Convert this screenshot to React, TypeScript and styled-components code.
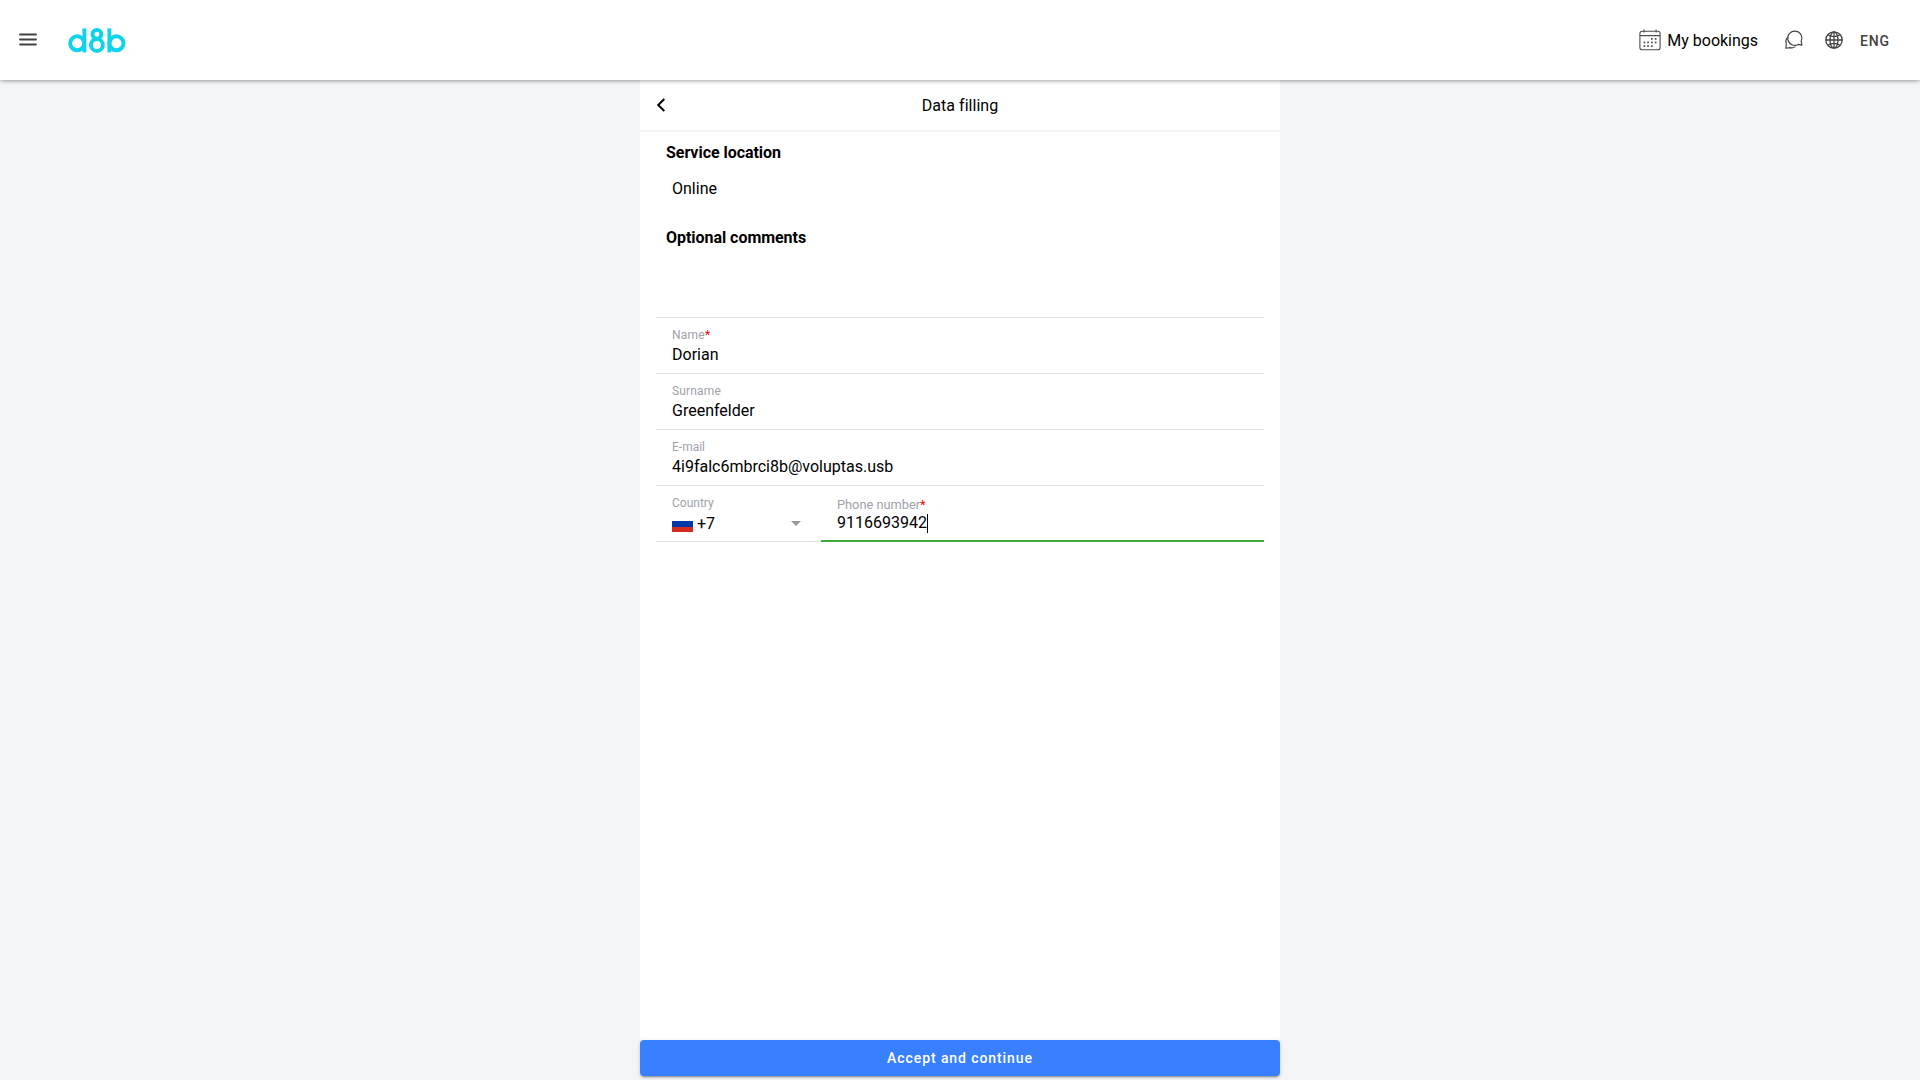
import React from 'react';
import styled, { createGlobalStyle } from 'styled-components';

const Global = createGlobalStyle`
  * { box-sizing: border-box; }
  body { margin: 0; background: #f3f5f9; font-family: Roboto, sans-serif; font-size: 16px; color: #000; }
`;

const Page = styled.div`
  height: 100vh;
  display: flex;
  flex-direction: column;
  align-items: center;
  overflow: hidden;
`;

const Header = styled.header`
  width: 100%;
  height: 80px;
  flex: none;
  display: flex;
  align-items: center;
  padding: 0 30px 0 16px;
  background: #fff;
  z-index: 1;
  box-shadow: 0 2px 4px -1px rgba(0, 0, 0, 0.2), 0 1px 4px rgba(0, 0, 0, 0.2);
`;

const IconButton = styled.button<{ $left?: number }>`
  display: flex;
  padding: 0;
  margin-left: ${(p) => p.$left ?? 0}px;
  border: 0;
  background: none;
  color: #424242;
`;

const Logo = styled.svg`
  margin-left: 27px;
`;

const Bookings = styled.a`
  display: flex;
  align-items: center;
  gap: 6px;
  margin-left: auto;
  line-height: 20px;
  color: #000;
`;

const BookingsText = styled.span`
  padding-top: 2px;
`;

const Language = styled.span`
  margin-left: 17px;
  padding-top: 1px;
  font-size: 14px;
  font-weight: 500;
  line-height: 20px;
  letter-spacing: 0.06em;
  color: #424242;
`;

const Panel = styled.main`
  width: 640px;
  flex: 1;
  display: flex;
  flex-direction: column;
  background: #fff;
`;

const TitleBar = styled.div`
  height: 52px;
  display: grid;
  grid-template-columns: 40px 1fr 40px;
  align-items: center;
  border-bottom: 2px solid #f3f4fa;
`;

const Title = styled.h1`
  margin: 0;
  padding-top: 2px;
  font-size: 16px;
  font-weight: 400;
  line-height: 20px;
  letter-spacing: 0.04px;
  text-align: center;
`;

const Form = styled.form`
  flex: 1;
  display: flex;
  flex-direction: column;
  padding: 0 16px;
`;

const Heading = styled.h2<{ $top: number }>`
  margin: ${(p) => p.$top}px 0 0 10px;
  font-size: 16px;
  font-weight: 700;
  line-height: 20px;
  letter-spacing: -0.04px;
`;

const Location = styled.p`
  margin: 16px 0 0 16px;
  line-height: 20px;
`;

const Comments = styled.div`
  height: 70px;
  border-bottom: 1px solid #dedede;
`;

const Field = styled.label<{ $active?: boolean; $width?: number }>`
  display: flex;
  flex-direction: column;
  ${(p) => (p.$width ? `width: ${p.$width}px;` : '')}
  ${(p) => (p.$active ? 'flex: 1;' : '')}
  height: 56px;
  padding: ${(p) => (p.$active ? 11 : 9)}px 16px 0;
  border-bottom: ${(p) => (p.$active ? '2px solid #3dab39' : '1px solid #dedede')};
`;

const Label = styled.span<{ $spacing?: number; $floating?: boolean }>`
  font-size: ${(p) => (p.$floating ? 12.8 : 12)}px;
  line-height: 16px;
  letter-spacing: ${(p) => p.$spacing ?? 0}px;
  color: #a0a2aa;
`;

const Star = styled.span`
  color: #f00;
`;

const Value = styled.span<{ $top?: number }>`
  display: flex;
  align-items: center;
  margin-top: ${(p) => p.$top ?? 2}px;
  line-height: 20px;
`;

const PhoneRow = styled.div`
  display: flex;
  align-items: flex-start;
`;

const Flag = styled.i`
  width: 21px;
  height: 16px;
  margin: 0 4px 1px 0;
  background: linear-gradient(#fff 0 33.3%, #0039a6 33.3% 66.6%, #d52b1e 66.6%);
`;

const Arrow = styled.i`
  margin: 0 4px 1px auto;
  border: 5px solid transparent;
  border-top-color: #999;
  border-bottom: 0;
`;

const Caret = styled.i`
  width: 1px;
  height: 19px;
  background: #000;
`;

const Submit = styled.button`
  width: 100%;
  height: 36px;
  margin-bottom: 4px;
  border: 0;
  border-radius: 4px;
  background: #3880ff;
  color: #fff;
  font-family: inherit;
  font-size: 14px;
  font-weight: 500;
  letter-spacing: 0.065em;
  box-shadow: 0 3px 1px -2px rgba(0, 0, 0, 0.2), 0 2px 2px 0 rgba(0, 0, 0, 0.14), 0 1px 5px 0 rgba(0, 0, 0, 0.12);
`;

const PageFoot = styled.div`
  width: 640px;
  flex: none;
  height: 40px;
`;

const calendarDots = [
  [12, 9], [15.8, 9],
  [4.6, 12.6], [8.2, 12.6], [12, 12.6], [15.8, 12.6],
  [4.6, 16.2], [8.2, 16.2], [12, 16.2],
];

const CalendarIcon = () => (
  <svg width="22" height="22" viewBox="0 0 22 22" fill="none" stroke="#4c4c4c" strokeWidth="1.1">
    <rect x="0.9" y="2.2" width="20.2" height="18.6" rx="2.4" />
    <path d="M1 6.6h20M4.9 0.4v3M17.1 0.4v3" />
    {calendarDots.map(([x, y]) => (
      <rect key={`${x}-${y}`} x={x} y={y} width="1.7" height="1.7" fill="#4c4c4c" stroke="none" />
    ))}
  </svg>
);

const ChatIcon = () => (
  <svg width="20" height="20" viewBox="0 0 20 20" fill="none" stroke="#424242" strokeWidth="1.15" strokeLinejoin="round" strokeLinecap="round">
    <path d="M17.9 15.1l-3.6-.7A7.1 7.1 0 1 1 17.2 11.3z" />
    <path d="M2.6 8.4A6 6 0 0 0 2.3 13.6L1.9 18.3l4.1-.7c2 .6 3.6.3 5-.7" />
  </svg>
);

const GlobeIcon = () => (
  <svg width="18" height="18" viewBox="0 0 18 18" fill="none" stroke="#424242" strokeWidth="1.3">
    <circle cx="9" cy="9" r="8.2" />
    <ellipse cx="9" cy="9" rx="4" ry="8.2" />
    <path d="M9 .8v16.4M.8 9h16.4M2.8 3.8c3.8 2.3 8.6 2.3 12.4 0M2.8 14.2c3.8-2.3 8.6-2.3 12.4 0" />
  </svg>
);

export default function App() {
  return (
    <>
      <Global />
      <Page>
        <Header>
          <IconButton aria-label="Menu">
            <svg width="24" height="24" viewBox="0 0 24 24" stroke="#424242" strokeWidth="1.8" strokeLinecap="round">
              <path d="M4 6.5h16M4 11.5h16M4 16.5h16" />
            </svg>
          </IconButton>
          <Logo width="60" height="28" viewBox="66.6 25.6 60 28" fill="none" stroke="#0fd3ea" strokeWidth="3.9" aria-label="d8b">
            <circle cx="76.8" cy="42.9" r="7" />
            <path d="M84 28v24" />
            <circle cx="96.5" cy="33.9" r="4.4" />
            <circle cx="96.5" cy="44.6" r="6" />
            <circle cx="116.1" cy="42.9" r="7" />
            <path d="M109 28v24" />
          </Logo>
          <Bookings>
            <CalendarIcon />
            <BookingsText>My bookings</BookingsText>
          </Bookings>
          <IconButton $left={26} aria-label="Messages"><ChatIcon /></IconButton>
          <IconButton $left={21} aria-label="Language"><GlobeIcon /></IconButton>
          <Language>ENG</Language>
        </Header>
        <Panel>
          <TitleBar>
            <IconButton $left={14} aria-label="Back">
              <svg width="14" height="16" viewBox="0 0 14 16" fill="none" stroke="#000" strokeWidth="2">
                <path d="M10.3 2L4.2 8l6.1 6" />
              </svg>
            </IconButton>
            <Title>Data filling</Title>
          </TitleBar>
          <Form>
            <Heading $top={11}>Service location</Heading>
            <Location>Online</Location>
            <Heading $top={29}>Optional comments</Heading>
            <Comments />
            <Field>
              <Label $spacing={0.25}>Name<Star>*</Star></Label>
              <Value>Dorian</Value>
            </Field>
            <Field>
              <Label $spacing={0.15}>Surname</Label>
              <Value>Greenfelder</Value>
            </Field>
            <Field>
              <Label>E-mail</Label>
              <Value>4i9falc6mbrci8b@voluptas.usb</Value>
            </Field>
            <PhoneRow>
              <Field $width={165}>
                <Label>Country</Label>
                <Value $top={3}><Flag />+7<Arrow /></Value>
              </Field>
              <Field $active>
                <Label $floating>Phone number<Star>*</Star></Label>
                <Value $top={0}>9116693942<Caret /></Value>
              </Field>
            </PhoneRow>
          </Form>
        </Panel>
        <PageFoot><Submit>Accept and continue</Submit></PageFoot>
      </Page>
    </>
  );
}
